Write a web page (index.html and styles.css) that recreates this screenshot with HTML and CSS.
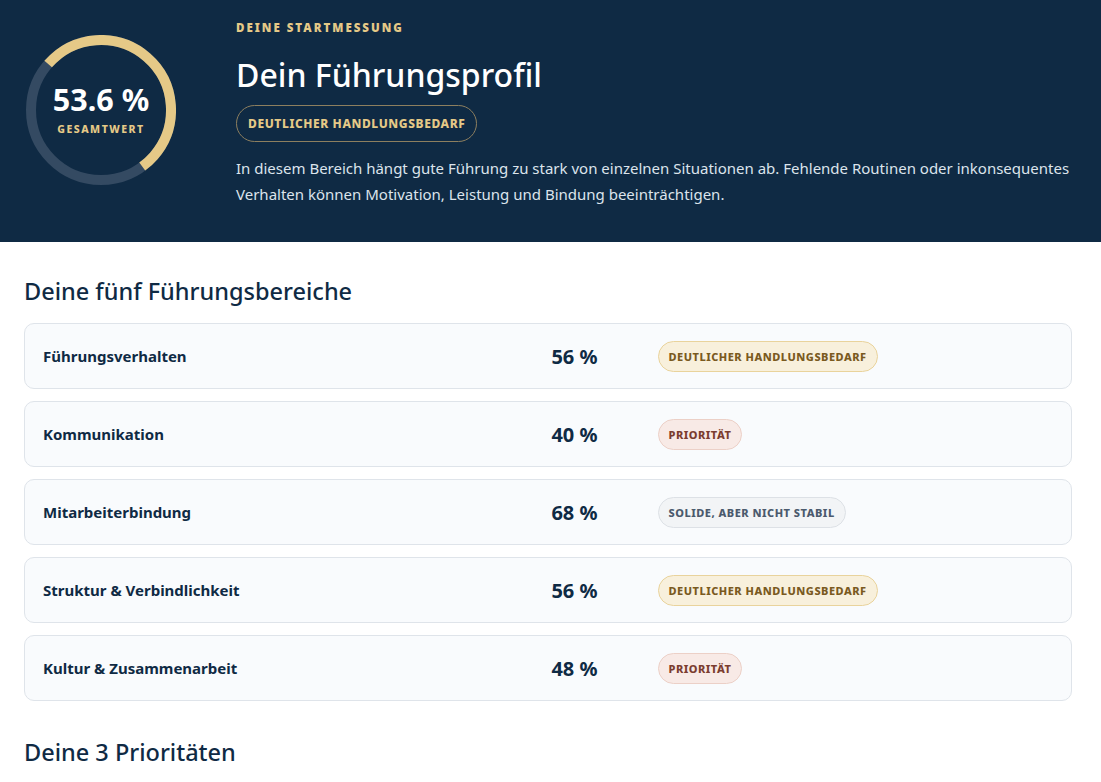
FILE: index.html
```html
<!DOCTYPE html>
<html lang="de">
<head>
<meta charset="utf-8">
<title>Dein Führungsprofil</title>
<link rel="stylesheet" href="styles.css">
</head>
<body>
<header class="hero">
  <div class="ring">
    <svg class="ring-svg" width="150" height="150" viewBox="0 0 150 150">
      <circle class="ring-track" cx="75" cy="75" r="70"/>
      <circle class="ring-value" cx="75" cy="75" r="70" pathLength="100" stroke-dasharray="53.6 100" transform="rotate(-139 75 75)"/>
    </svg>
    <div class="ring-label">
      <div class="ring-num">53.6 %</div>
      <div class="ring-cap">GESAMTWERT</div>
    </div>
  </div>
  <div class="hero-text">
    <div class="eyebrow">DEINE STARTMESSUNG</div>
    <h1 class="title">Dein Führungsprofil</h1>
    <span class="hero-badge">DEUTLICHER HANDLUNGSBEDARF</span>
    <p class="hero-desc">In diesem Bereich hängt gute Führung zu stark von einzelnen Situationen ab. Fehlende Routinen oder inkonsequentes Verhalten können Motivation, Leistung und Bindung beeinträchtigen.</p>
  </div>
</header>
<main class="content">
  <h2 class="section-title">Deine fünf Führungsbereiche</h2>
  <div class="areas">
    <div class="area">
      <div class="area-name">Führungsverhalten</div>
      <div class="area-pct">56 %</div>
      <div><span class="badge badge-warn">DEUTLICHER HANDLUNGSBEDARF</span></div>
    </div>
    <div class="area">
      <div class="area-name">Kommunikation</div>
      <div class="area-pct">40 %</div>
      <div><span class="badge badge-prio">PRIORITÄT</span></div>
    </div>
    <div class="area">
      <div class="area-name">Mitarbeiterbindung</div>
      <div class="area-pct">68 %</div>
      <div><span class="badge badge-solid">SOLIDE, ABER NICHT STABIL</span></div>
    </div>
    <div class="area">
      <div class="area-name">Struktur &amp; Verbindlichkeit</div>
      <div class="area-pct">56 %</div>
      <div><span class="badge badge-warn">DEUTLICHER HANDLUNGSBEDARF</span></div>
    </div>
    <div class="area">
      <div class="area-name">Kultur &amp; Zusammenarbeit</div>
      <div class="area-pct">48 %</div>
      <div><span class="badge badge-prio">PRIORITÄT</span></div>
    </div>
  </div>
  <h2 class="section-title section-title-2">Deine 3 Prioritäten</h2>
</main>
</body>
</html>
```
FILE: styles.css
```css
* { box-sizing: border-box; }
html, body { margin: 0; padding: 0; }
body {
  font-family: "Noto Sans", "Open Sans", sans-serif;
  background: #ffffff;
  color: #0f2a44;
}
.hero {
  background: #0f2a44;
  display: flex;
  align-items: flex-start;
  gap: 60px;
  padding: 20px 26px 32px 26px;
  height: 242px;
}
.ring {
  position: relative;
  width: 150px;
  height: 150px;
  flex: 0 0 150px;
  margin-top: 15px;
}
.ring-svg { display: block; }
.ring-track {
  fill: none;
  stroke: #344a62;
  stroke-width: 10;
}
.ring-value {
  fill: none;
  stroke: #e5c987;
  stroke-width: 10;
}
.ring-label {
  position: absolute;
  inset: 0;
  display: flex;
  flex-direction: column;
  align-items: center;
  justify-content: center;
  padding-bottom: 4px;
}
.ring-num {
  color: #ffffff;
  font-weight: 700;
  font-size: 30.5px;
  line-height: 36px;
}
.ring-cap {
  color: #e5c987;
  font-weight: 800;
  font-size: 10.5px;
  letter-spacing: 1.5px;
  margin-top: 5px;
}
.hero-text { flex: 1; min-width: 0; }
.eyebrow {
  color: #e5c987;
  font-weight: 900;
  font-size: 11.5px;
  letter-spacing: 2px;
  line-height: 16px;
}
.title {
  color: #ffffff;
  font-weight: 500;
  font-size: 32px;
  line-height: 44px;
  margin: 17px 0 8px 0;
}
.hero-badge {
  display: inline-block;
  border: 1px solid #8d7f5f;
  color: #e5c987;
  font-weight: 800;
  font-size: 12px;
  letter-spacing: 0.6px;
  line-height: 17px;
  padding: 9px 11px;
  border-radius: 999px;
}
.hero-desc {
  color: #dce4ec;
  font-size: 15px;
  line-height: 26px;
  margin: 13px 0 0 0;
}
.content {
  max-width: 1096px;
  padding: 25px 24px 24px 24px;
}
.section-title {
  font-size: 23.5px;
  font-weight: 500;
  line-height: 32px;
  margin: 8px 0 16px 0;
  color: #0f2a44;
}
.section-title-2 { margin-top: 35px; }
.areas {
  display: flex;
  flex-direction: column;
  gap: 12px;
}
.area {
  display: grid;
  grid-template-columns: 1fr 100px 1fr;
  column-gap: 60px;
  align-items: center;
  height: 66px;
  padding: 0 19px 0 18px;
  background: #f9fbfd;
  border: 1px solid #dfe4ea;
  border-radius: 10px;
}
.area-name {
  font-weight: 700;
  font-size: 15px;
  color: #0f2a44;
}
.area-pct {
  font-weight: 700;
  font-size: 20px;
  text-align: right;
  color: #0f2a44;
}
.badge {
  display: inline-block;
  font-weight: 800;
  font-size: 11px;
  letter-spacing: 0.5px;
  line-height: 15px;
  padding: 7px 10px;
  border-radius: 999px;
  border: 1px solid;
}
.badge-warn { background: #f8f0dc; border-color: #e9d39c; color: #7a5a1f; }
.badge-prio { background: #f8eae6; border-color: #ecd0c7; color: #7b3d2f; }
.badge-solid { background: #f2f4f6; border-color: #dde1e6; color: #4b5a6d; }
```
